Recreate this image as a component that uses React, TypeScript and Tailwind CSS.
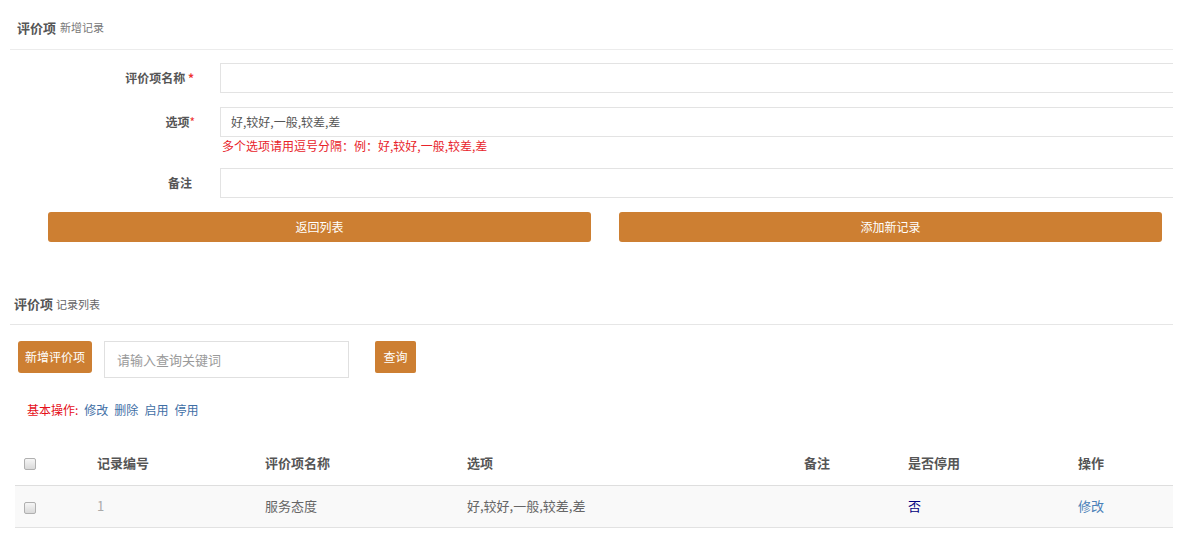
import React from "react";

const font = { fontFamily: '"Noto Sans CJK SC", "Noto Sans", sans-serif' };

function Box() {
  return (
    <span className="inline-block w-[12px] h-[12px] rounded-[2px] border border-[#b0b0b0] bg-gradient-to-b from-[#f6f6f6] to-[#d9d9d9] align-middle" />
  );
}

export default function App() {
  return (
    <div className="w-[1183px] h-[546px] bg-white overflow-hidden" style={font}>
      <div className="w-[1173px] overflow-hidden">
        {/* Section 1 header */}
        <div className="ml-[10px] h-[50px] border-b border-[#ececec] flex items-center pl-[7px] pt-[6px]">
          <span className="text-[13px] font-bold text-[#555]">评价项</span>
          <span className="text-[11px] text-[#777] ml-[4px]">新增记录</span>
        </div>

        {/* Form */}
        <div className="pt-[13px]">
          <div className="flex items-start">
            <div className="w-[200px] shrink-0 text-right text-[12px] font-bold text-[#555] h-[30px] leading-[30px] pr-[6px]">
              评价项名称 <span className="text-[#e33]">*</span>
            </div>
            <div className="ml-[20px] flex-1 -mr-[4px] h-[30px] border border-[#e3e3e3]" />
          </div>
          <div className="flex items-start mt-[14px]">
            <div className="w-[200px] shrink-0 text-right text-[12px] font-bold text-[#555] h-[30px] leading-[30px] pr-[5px]">
              选项<span className="text-[#e33] font-normal">*</span>
            </div>
            <div className="ml-[20px] flex-1 -mr-[4px]">
              <div className="h-[30px] border border-[#e3e3e3] flex items-center pl-[10px] text-[12px] text-[#555]">
                好,较好,一般,较差,差
              </div>
              <div className="text-[12px] text-[#e8232a] leading-[16px] mt-[1px] pl-[2px]">
                多个选项请用逗号分隔：例：好,较好,一般,较差,差
              </div>
            </div>
          </div>
          <div className="flex items-start mt-[14px]">
            <div className="w-[200px] shrink-0 text-right text-[12px] font-bold text-[#555] h-[30px] leading-[30px] pr-[8px]">
              备注
            </div>
            <div className="ml-[20px] flex-1 -mr-[4px] h-[30px] border border-[#e3e3e3]" />
          </div>

          <div className="ml-[48px] w-[1114px] grid grid-cols-2 gap-[28px] mt-[14px]">
            <button className="h-[30px] rounded-[3px] bg-[#cd7f32] text-white text-[12px] leading-[30px]">
              返回列表
            </button>
            <button className="h-[30px] rounded-[3px] bg-[#cd7f32] text-white text-[12px] leading-[30px]">
              添加新记录
            </button>
          </div>
        </div>

        {/* Section 2 header */}
        <div className="ml-[10px] mt-[38px] h-[45px] border-b border-[#e6e6e6] flex items-center pl-[4px] pt-[4px]">
          <span className="text-[13px] font-bold text-[#555]">评价项</span>
          <span className="text-[11px] text-[#666] ml-[3px]">记录列表</span>
        </div>

        {/* Toolbar */}
        <div className="flex items-start ml-[18px] mt-[16px]">
          <button className="w-[74px] h-[32px] rounded-[3px] bg-[#cd7f32] text-white text-[12px]">
            新增评价项
          </button>
          <div className="ml-[12px] w-[245px] h-[37px] border border-[#e0e0e0] flex items-center pl-[12px] text-[13px] text-[#9a9a9a]">
            请输入查询关键词
          </div>
          <button className="ml-[26px] w-[41px] h-[32px] rounded-[2px] bg-[#cd7f32] text-white text-[12px]">
            查询
          </button>
        </div>

        {/* Basic ops */}
        <div className="ml-[27px] mt-[23px] text-[12px] leading-[18px] flex gap-[6px]">
          <span className="text-[#e5101a]">基本操作:</span>
          <span className="text-[#3f6fa6]">修改</span>
          <span className="text-[#3f6fa6]">删除</span>
          <span className="text-[#3f6fa6]">启用</span>
          <span className="text-[#3f6fa6]">停用</span>
        </div>

        {/* Table */}
        <table className="ml-[15px] mt-[22px] w-[1158px] table-fixed border-collapse text-[13px]">
          <colgroup>
            <col className="w-[82px]" />
            <col className="w-[168px]" />
            <col className="w-[202px]" />
            <col className="w-[337px]" />
            <col className="w-[104px]" />
            <col className="w-[170px]" />
            <col className="w-[95px]" />
          </colgroup>
          <thead>
            <tr className="h-[44px] border-b border-[#dedede] text-left text-[#555] font-bold">
              <th className="pl-[9px] font-normal"><Box /></th>
              <th className="font-bold">记录编号</th>
              <th className="font-bold">评价项名称</th>
              <th className="font-bold">选项</th>
              <th className="font-bold">备注</th>
              <th className="font-bold">是否停用</th>
              <th className="font-bold">操作</th>
            </tr>
          </thead>
          <tbody>
            <tr className="h-[42px] bg-[#f9f9f9] border-b border-[#e2e2e2] text-[#666]">
              <td className="pl-[9px]"><Box /></td>
              <td className="text-[#aaa]">1</td>
              <td>服务态度</td>
              <td>好,较好,一般,较差,差</td>
              <td></td>
              <td className="text-[#000080]">否</td>
              <td className="text-[#4a7fb8]">修改</td>
            </tr>
          </tbody>
        </table>
      </div>
    </div>
  );
}
